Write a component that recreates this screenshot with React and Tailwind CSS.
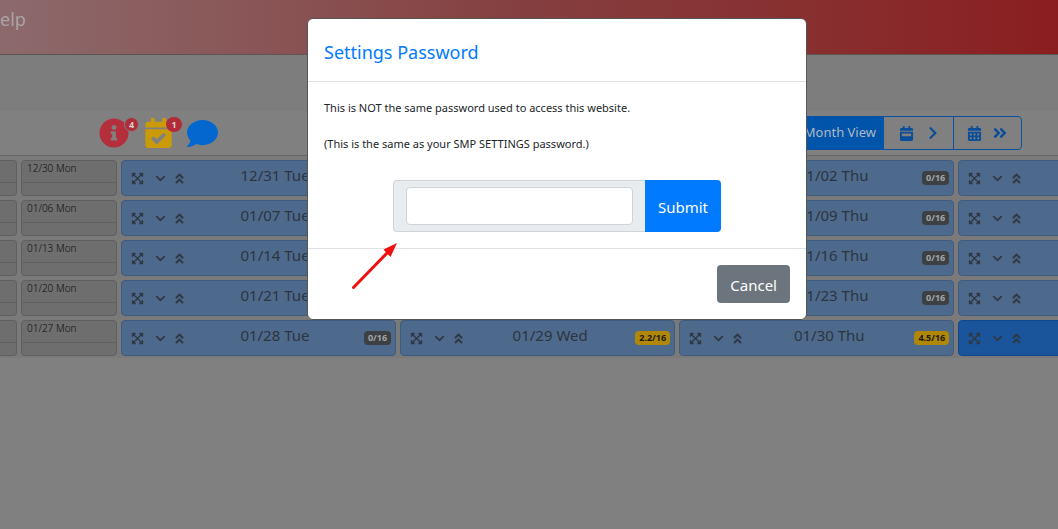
import React, { useState } from "react";
import {
  FaAngleDoubleRight,
  FaAngleDoubleUp,
  FaCalendarAlt,
  FaCalendarCheck,
  FaCalendarWeek,
  FaChevronDown,
  FaChevronRight,
  FaComment,
  FaExpandArrowsAlt,
  FaInfoCircle,
} from "react-icons/fa";

const weeks = [
  {
    monday: "12/30 Mon",
    days: [
      { label: "12/31 Tue" },
      { label: "" },
      { label: "01/02 Thu", hours: "0/16" },
      { label: "" },
    ],
  },
  {
    monday: "01/06 Mon",
    days: [
      { label: "01/07 Tue" },
      { label: "" },
      { label: "01/09 Thu", hours: "0/16" },
      { label: "" },
    ],
  },
  {
    monday: "01/13 Mon",
    days: [
      { label: "01/14 Tue" },
      { label: "" },
      { label: "01/16 Thu", hours: "0/16" },
      { label: "" },
    ],
  },
  {
    monday: "01/20 Mon",
    days: [
      { label: "01/21 Tue" },
      { label: "" },
      { label: "01/23 Thu", hours: "0/16" },
      { label: "" },
    ],
  },
  {
    monday: "01/27 Mon",
    days: [
      { label: "01/28 Tue", hours: "0/16" },
      { label: "01/29 Wed", hours: "2.2/16", busy: true },
      { label: "01/30 Thu", hours: "4.5/16", busy: true },
      { label: "", today: true },
    ],
  },
];

const DayCard = ({ day }) => (
  <div
    className={`flex h-9 shrink-0 basis-[26%] items-center rounded border pl-[9px] pr-1 ${
      day.today
        ? "border-[#12468a] bg-[#1a559c]"
        : "border-[#3f5c7f] bg-[#4d6a8c]"
    }`}
  >
    <div className="flex items-center text-[13px] text-[#2f3a46]">
      <button type="button" aria-label="Expand day">
        <FaExpandArrowsAlt />
      </button>
      <button type="button" aria-label="Show day" className="ml-[10px]">
        <FaChevronDown className="p-px" />
      </button>
      <button type="button" aria-label="Collapse day" className="ml-[6px]">
        <FaAngleDoubleUp />
      </button>
    </div>
    <span className="flex-1 pb-[6px] text-center text-[15px] leading-6 text-[#2c353f]">
      {day.label}
    </span>
    <span
      className={`min-w-[27px] rounded px-1 text-center text-[9px] font-bold leading-[14px] ${
        day.busy ? "bg-[#b08707] text-[#1b1a14]" : "text-[#a5a5a5]"
      } ${day.hours && !day.busy ? "bg-[#3d4043]" : ""}`}
    >
      {day.hours}
    </span>
  </div>
);

const PasswordModal = () => {
  const [password, setPassword] = useState("");

  const handleSubmit = (e) => {
    e.preventDefault();
    setPassword("");
  };

  return (
    <div className="fixed inset-0 flex items-start justify-center overflow-hidden pl-[72px] pr-4 pt-[18px]">
      <div
        role="dialog"
        aria-labelledby="modal-title"
        className="relative w-full max-w-[500px] rounded-md border border-[#555] bg-white"
      >
        <div className="border-b border-[#dee2e6] px-4 pb-[14px] pt-[18px]">
          <h5 id="modal-title" className="text-lg leading-[30px] text-[#007bff]">
            Settings Password
          </h5>
        </div>

        <div className="px-4 pb-4 pt-[17px] text-[11px] leading-[18px] text-[#212529]">
          <p>This is NOT the same password used to access this website.</p>
          <p className="mt-[18px]">
            (This is the same as your SMP SETTINGS password.)
          </p>
          <form
            onSubmit={handleSubmit}
            className="mx-auto mt-[27px] flex w-fit text-[15px]"
          >
            <div className="rounded-l border border-r-0 border-[#ced4da] bg-[#e9ecef] px-3 py-[6px]">
              <input
                type="password"
                aria-label="Settings password"
                value={password}
                onChange={(e) => setPassword(e.target.value)}
                className="block h-[38px] w-[227px] rounded border border-[#ced4da] bg-white px-3"
              />
            </div>
            <button
              type="submit"
              className="rounded-r bg-[#007bff] px-[13px] pt-[2px] text-white"
            >
              Submit
            </button>
          </form>
        </div>

        <div className="flex justify-end border-t border-[#dee2e6] p-4">
          <button
            type="button"
            className="h-[38px] rounded bg-[#6c757d] px-[13px] pt-[2px] text-[15px] text-white"
          >
            Cancel
          </button>
        </div>

        <svg
          className="absolute left-[43px] top-[222px] h-12 w-12"
          viewBox="0 0 48 48"
        >
          <path
            d="M2.500 46.500L37 11"
            stroke="#f01010"
            strokeWidth="3"
            strokeLinecap="round"
          />
          <path d="M46 2L32.500 8.500L35.500 12L39.500 16Z" fill="#f01010" />
        </svg>
      </div>
    </div>
  );
};

const App = () => {
  return (
    <div className="min-h-screen overflow-hidden bg-[#808080] font-['Noto_Sans','Open_Sans',sans-serif]">
      <header className="h-[55px] border-b border-[#5c5353] bg-linear-to-r from-[#8c6a6c] via-[#853e3f] to-[#8a1d20]">
        <a
          href="#help"
          className="block pt-1 text-lg leading-[30px] text-[#aaa3a3]"
        >
          elp
        </a>
      </header>
      <div className="h-14 bg-[#7d7d7d]" />

      <div className="flex h-[45px] items-center border-b border-[#666] bg-[#808080] pl-[99px] pr-9">
        <button
          type="button"
          aria-label="Information"
          className="relative text-[#b52e3b]"
        >
          <FaInfoCircle className="h-[30px] w-[30px]" />
          <span className="absolute -right-[10px] -top-px h-[15px] w-[15px] rounded-full border border-[#808080] bg-[#b02c39] text-center text-[9px] font-bold leading-[13px] text-[#d5d5d5]">
            4
          </span>
        </button>
        <button
          type="button"
          aria-label="Tasks"
          className="relative ml-4 text-[#cb9a07]"
        >
          <FaCalendarCheck className="h-[30px] w-[27px]" />
          <span className="absolute -right-[10px] -top-px h-[15px] w-4 rounded-full bg-[#b02c39] text-center text-[9px] font-bold leading-[15px] text-[#d5d5d5]">
            1
          </span>
        </button>
        <button
          type="button"
          aria-label="Messages"
          className="ml-[15px] text-[#0268d0]"
        >
          <FaComment className="h-[31px] w-[31px]" />
        </button>

        <div className="ml-auto flex h-[34px] rounded border border-[#0a52a0] text-[13px] text-[#0a4d98]">
          <button type="button" className="bg-[#0054aa] px-2 text-[#aeb9c4]">
            Month View
          </button>
          <button
            type="button"
            aria-label="Next week"
            className="flex w-[69px] items-center justify-center gap-[14px]"
          >
            <FaCalendarWeek className="h-[15px] w-[15px]" />
            <FaChevronRight className="h-[14px] w-[10px]" />
          </button>
          <button
            type="button"
            aria-label="Next month"
            className="flex w-[68px] items-center justify-center gap-[10px] border-l border-[#0a52a0]"
          >
            <FaCalendarAlt className="h-[15px] w-[15px]" />
            <FaAngleDoubleRight className="h-4 w-4" />
          </button>
        </div>
      </div>

      <main className="flex flex-col gap-1 bg-[#7a7a7a] pb-[2px] pt-1">
        {weeks.map((week) => (
          <div key={week.monday} className="flex gap-1">
            <div className="h-9 w-[17px] shrink-0 rounded-r border border-l-0 border-[#5f5f5f] bg-[#6e6e6e]">
              <div className="h-[22px] border-b border-[#616161]" />
            </div>
            <div className="h-9 w-24 shrink-0 rounded border border-[#5f5f5f] bg-[#6e6e6e]">
              <div className="h-[22px] border-b border-[#616161] pl-[5px] text-[10px] font-light leading-[14px] text-[#0d0d0d]">
                {week.monday}
              </div>
            </div>
            {week.days.map((day, i) => (
              <DayCard key={i} day={day} />
            ))}
          </div>
        ))}
      </main>

      <PasswordModal />
    </div>
  );
};

export default App;
